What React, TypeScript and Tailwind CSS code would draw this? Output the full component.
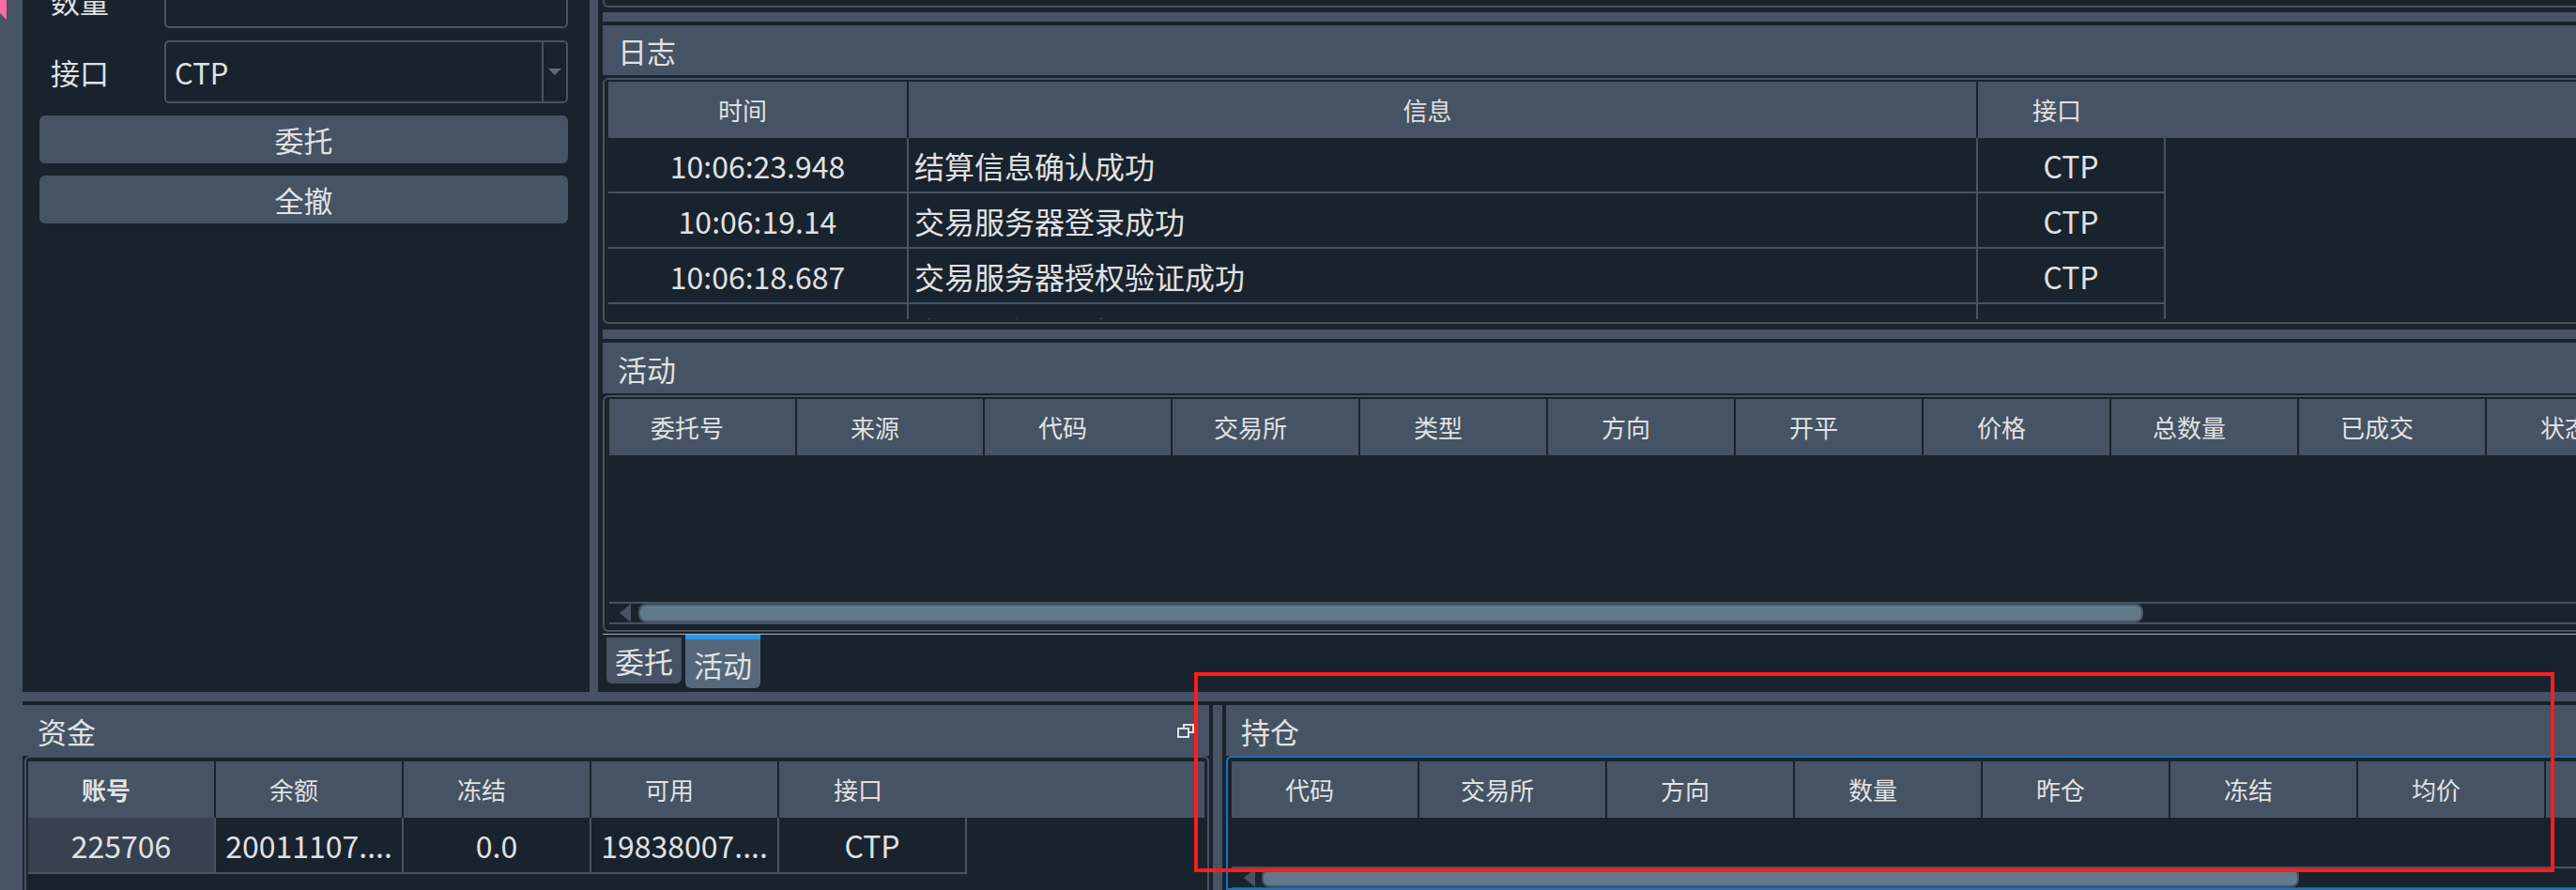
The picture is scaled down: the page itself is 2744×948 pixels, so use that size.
import type { ReactNode } from 'react'

function TitleBar({ title, className = '', children }: { title: string; className?: string; children?: ReactNode }) {
  return (
    <div className={`flex shrink-0 items-center justify-between bg-[#455364] pl-[16px] text-[31px] leading-none ${className}`}>
      <span>{title}</span>
      {children}
    </div>
  )
}

function HeadCell({ label, width, divider = true, bold = false }: { label: string; width: string; divider?: boolean; bold?: boolean }) {
  return (
    <div
      className={`flex h-full shrink-0 items-center justify-center pr-[32px] ${width} ${divider ? 'border-r-2 border-[#19232D]' : ''} ${bold ? 'font-bold' : ''}`}
    >
      {label}
    </div>
  )
}

function LeftArrow() {
  return (
    <svg width="12" height="20" viewBox="0 0 12 20">
      <polygon points="12,0 12,20 0,10" fill="#455364" />
    </svg>
  )
}

export default function App() {
  // 日志
  const logs = [
    ['10:06:23.948', '结算信息确认成功'],
    ['10:06:19.14', '交易服务器登录成功'],
    ['10:06:18.687', '交易服务器授权验证成功'],
    ['10:06:18.529', '交易服务器连接成功'],
  ]
  const activeCols = ['委托号', '来源', '代码', '交易所', '类型', '方向', '开平', '价格', '总数量', '已成交', '状态']
  const posCols = ['代码', '交易所', '方向', '数量', '昨仓', '冻结', '均价', '']
  const fundRow = ['225706', '20011107....', '0.0', '19838007....', 'CTP']

  return (
    <div className="relative flex h-[948px] w-[2744px] overflow-hidden bg-[#19232D] font-['Noto_Sans_CJK_SC','Noto_Sans',sans-serif] text-[#E0E1E3]">
      {/* left edge strip */}
      <div className="w-[24px] shrink-0 bg-[#455364]">
        <svg width="7" height="21" viewBox="0 0 7 21" className="block">
          <polygon points="0,0 7,0 7,21 0,14" fill="#ff6ba6" />
        </svg>
      </div>

      <div className="flex min-w-0 flex-1 flex-col">
        {/* top area */}
        <div className="flex h-[737px] shrink-0">
          {/* order form */}
          <div className="-mt-[30px] flex w-[604px] shrink-0 flex-col gap-[13px] pl-[18px] pr-[23px] text-[31px] leading-none">
            <div className="flex h-[60px] shrink-0 items-center">
              <span className="w-[133px] shrink-0 pl-[12px]">数量</span>
              <div className="h-full flex-1 rounded-[5px] border-2 border-[#455364]" />
            </div>
            <div className="flex h-[67px] shrink-0 items-center">
              <span className="w-[133px] shrink-0 pl-[12px]">接口</span>
              <div className="flex h-full flex-1 items-center rounded-[5px] border-2 border-[#455364]">
                <span className="flex-1 pl-[9px]">CTP</span>
                <div className="flex h-full w-[26px] items-center justify-center border-l-2 border-[#455364]">
                  <svg width="14" height="8" viewBox="0 0 14 8">
                    <polygon points="0,0 14,0 7,7" fill="#5a6b7c" />
                  </svg>
                </div>
              </div>
            </div>
            <button className="h-[51px] shrink-0 rounded-[6px] bg-[#455364]">委托</button>
            <button className="h-[51px] shrink-0 rounded-[6px] bg-[#455364]">全撤</button>
          </div>

          <div className="w-[9px] shrink-0 bg-[#455364]" />
          <div className="w-[5px] shrink-0" />

          {/* right docks */}
          <div className="flex w-[2200px] shrink-0 flex-col">
            <div className="h-[8px] shrink-0 rounded-bl-[6px] border-b-2 border-l-2 border-[#455364]" />
            <div className="mt-[5px] h-[10px] shrink-0 bg-[#455364]" />

            <TitleBar title="日志" className="mt-[4px] h-[53px]" />
            <div className="mt-[3px] h-[262px] shrink-0 rounded-[6px] border-2 border-[#455364] pb-[3px] pl-[4px] pt-[2px]">
              <div className="h-full overflow-hidden">
                <div className="flex h-[60px] bg-[#455364] text-[26px] leading-none">
                  <HeadCell label="时间" width="w-[320px]" />
                  <HeadCell label="信息" width="w-[1139px]" />
                  <HeadCell label="接口" width="w-[200px]" divider={false} />
                  <div className="flex-1" />
                </div>
                {logs.map(([time, msg]) => (
                  <div key={time} className="flex h-[59px] w-fit border-b-2 border-[#455364] text-[32px] leading-none">
                    <div className="flex h-full w-[320px] items-center justify-center border-r-2 border-[#455364]">{time}</div>
                    <div className="flex h-full w-[1139px] items-center border-r-2 border-[#455364] pl-[6px]">{msg}</div>
                    <div className="flex h-full w-[200px] items-center justify-center border-r-2 border-[#455364]">CTP</div>
                  </div>
                ))}
              </div>
            </div>

            <div className="mt-[6px] h-[10px] shrink-0 bg-[#455364]" />

            <TitleBar title="活动" className="mt-[4px] h-[54px]" />
            <div className="mt-[2px] flex h-[252px] shrink-0 flex-col overflow-hidden rounded-[6px] border-2 border-[#455364] pl-[5px] pt-[2px]">
              <div className="flex h-[60px] shrink-0 bg-[#455364] text-[26px] leading-none">
                {activeCols.map((c) => (
                  <HeadCell key={c} label={c} width="w-[200px]" />
                ))}
              </div>
              <div className="h-[156px] shrink-0" />
              <div className="flex h-[24px] shrink-0 items-center border-y-2 border-[#455364]">
                <div className="ml-[11px] flex">
                  <LeftArrow />
                </div>
                <div className="ml-[8px] h-full w-[1603px] rounded-[8px] border-2 border-[#455364] bg-[#60798B]" />
              </div>
            </div>

            <div className="mt-[2px] h-px shrink-0 bg-[#aab3bd]" />
            <div className="flex items-start pl-[4px] text-[31px] leading-none">
              <div className="mt-[3px] flex h-[49px] w-[80px] items-center justify-center rounded-b-[6px] bg-[#455364]">委托</div>
              <div className="ml-[4px] flex h-[57px] w-[80px] items-center justify-center rounded-b-[6px] border-t-[5px] border-[#259AE9] bg-[#54687A]">
                活动
              </div>
            </div>
          </div>
        </div>

        {/* horizontal splitter */}
        <div className="h-[10px] shrink-0 bg-[#455364]" />

        {/* bottom area */}
        <div className="mt-[4px] flex min-h-0 flex-1">
          {/* 资金 */}
          <div className="flex w-[1264px] shrink-0 flex-col">
            <TitleBar title="资金" className="h-[54px] pr-[16px]">
              <svg width="18" height="15" viewBox="0 0 18 15" fill="none" stroke="#E0E1E3" strokeWidth="2">
                <rect x="7" y="1" width="10" height="8" />
                <rect x="1" y="5" width="11" height="9" fill="#455364" />
              </svg>
            </TitleBar>
            <div className="ml-[2px] flex-1 rounded-t-[6px] border-2 border-b-0 border-[#455364] pl-[2px] pr-[3px] pt-[4px]">
              <div className="flex h-[60px] bg-[#455364] text-[26px] leading-none">
                <HeadCell label="账号" width="w-[200px]" bold />
                <HeadCell label="余额" width="w-[200px]" />
                <HeadCell label="冻结" width="w-[200px]" />
                <HeadCell label="可用" width="w-[200px]" />
                <HeadCell label="接口" width="w-[200px]" divider={false} />
                <div className="flex-1" />
              </div>
              <div className="flex h-[60px] w-fit border-b-2 border-[#455364] text-[32px] leading-none">
                {fundRow.map((v, i) => (
                  <div
                    key={i}
                    className={`flex h-full w-[200px] items-center justify-center border-r-2 border-[#455364] ${i === 0 ? 'bg-[#37414F]' : ''}`}
                  >
                    {v}
                  </div>
                ))}
              </div>
            </div>
          </div>

          <div className="w-[4px] shrink-0" />
          <div className="w-[10px] shrink-0 bg-[#455364]" />
          <div className="w-[4px] shrink-0" />

          {/* 持仓 */}
          <div className="flex w-[1500px] shrink-0 flex-col">
            <TitleBar title="持仓" className="h-[54px]" />
            <div className="flex flex-1 flex-col overflow-hidden rounded-tl-[6px] border-2 border-[#1A72BB] pl-[4px] pt-[4px]">
              <div className="flex h-[60px] shrink-0 bg-[#455364] text-[26px] leading-none">
                {posCols.map((c, i) => (
                  <HeadCell key={i} label={c} width="w-[200px]" />
                ))}
              </div>
              <div className="h-[52px] shrink-0" />
              <div className="flex h-[24px] shrink-0 items-center border-y-2 border-[#455364]">
                <div className="ml-[13px] flex">
                  <LeftArrow />
                </div>
                <div className="ml-[7px] h-full w-[1105px] rounded-[8px] border-2 border-[#455364] bg-[#60798B]" />
              </div>
            </div>
          </div>
        </div>
      </div>

      {/* red annotation box */}
      <div className="pointer-events-none absolute left-[1272px] top-[716px] h-[213px] w-[1449px] border-4 border-[#ff1c1c]" />
    </div>
  )
}
